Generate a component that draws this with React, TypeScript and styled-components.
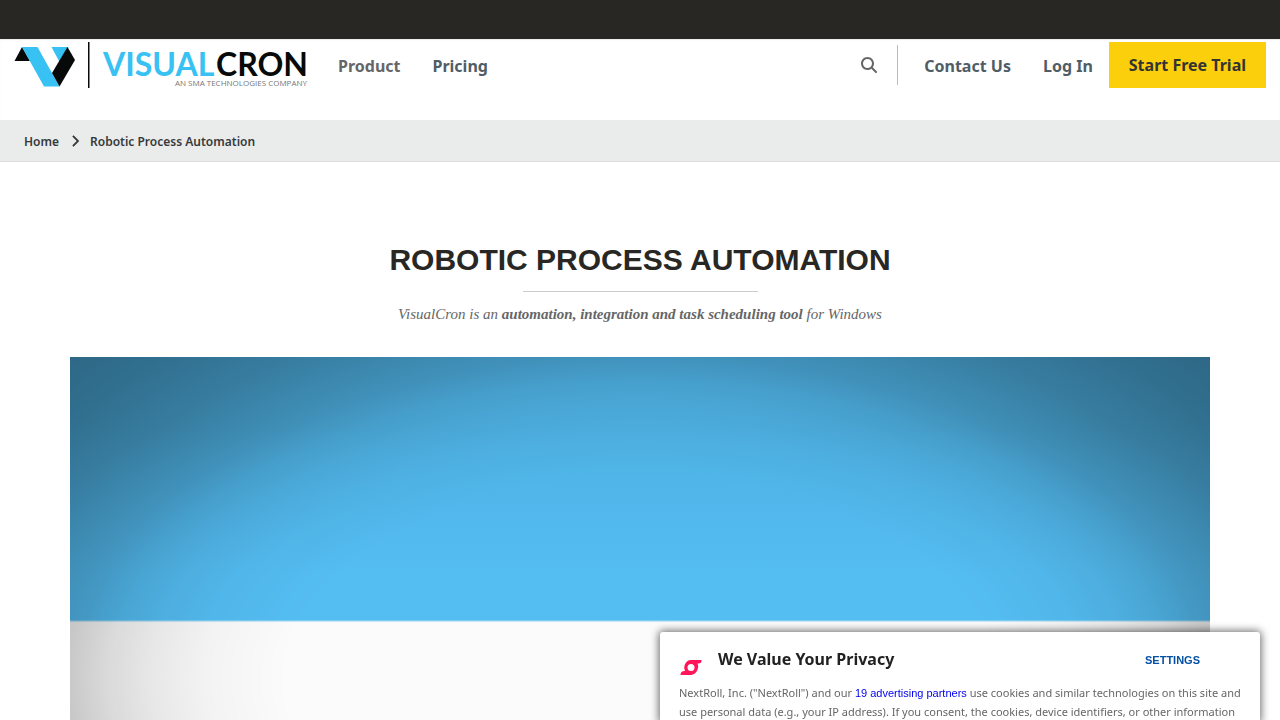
import React from "react";
import styled, { createGlobalStyle } from "styled-components";
import { FaChevronRight, FaMagnifyingGlass } from "react-icons/fa6";

const GlobalStyle = createGlobalStyle`
  *, *::before, *::after { box-sizing: border-box; }
  body {
    margin: 0;
    background: #fff;
    color: #666;
    font-family: "Noto Sans", sans-serif;
  }
  h1, h2, p, ol { margin: 0; padding: 0; }
  a { text-decoration: none; }
`;

const TopBar = styled.div`
  height: 39px;
  background: #282723;
`;

const Header = styled.header`
  display: flex;
  align-items: flex-start;
  min-height: 81px;
  padding: 3px 14px 0;
  box-shadow: inset 0 1px 1px rgba(0, 0, 0, 0.08);
`;

const LogoLink = styled.a`
  display: block;
  width: 294px;
  height: 46px;
  margin-right: 14px;
  svg { display: block; }
`;

const Nav = styled.nav`
  display: flex;
  align-items: center;
  height: 48px;
`;

const NavLink = styled.a<{ $tone?: string }>`
  padding: 0 16px;
  color: ${(p) => p.$tone || "#4f5d66"};
  font-size: 16px;
  font-weight: 700;
  line-height: 24px;
`;

const Tools = styled.div`
  display: flex;
  align-items: flex-start;
  margin-left: auto;
`;

const SearchButton = styled.button`
  display: flex;
  align-items: center;
  height: 46px;
  padding: 0 20px;
  border: 0;
  background: none;
  color: #666;
  font-size: 16px;
`;

const Divider = styled.span`
  width: 1px;
  height: 40px;
  margin: 3px 10px 0 0;
  background: #b9bcbe;
`;

const TrialLink = styled.a`
  display: flex;
  align-items: center;
  height: 46px;
  padding: 0 20px;
  background: #fccf0d;
  color: #333;
  font-size: 16px;
  font-weight: 700;
`;

const Crumbs = styled.nav`
  padding: 11px 24px 9px;
  border-bottom: 1px solid #dcdfde;
  background: #eaeceb;
  ol {
    display: flex;
    align-items: center;
    list-style: none;
  }
  li {
    display: flex;
    align-items: center;
  }
  svg {
    margin: 0 9px 2px 10px;
    stroke: #363a3c;
    stroke-width: 24px;
  }
`;

const Crumb = styled.a`
  color: #363a3c;
  font-size: 12px;
  font-weight: 600;
  line-height: 21px;
`;

const Main = styled.main`
  max-width: 1170px;
  margin: 0 auto;
  padding: 78px 15px 0;
`;

const Intro = styled.section`
  display: flex;
  flex-direction: column;
  align-items: center;
  text-align: center;
`;

const Title = styled.h1`
  color: #282723;
  font: bold 30px/40px "Liberation Sans", sans-serif;
  text-transform: uppercase;
`;

const Rule = styled.span`
  width: 235px;
  height: 1px;
  margin: 11px 0 10px;
  background: #ccc;
`;

const Lead = styled.p`
  font: italic 15px/24px "Liberation Serif", serif;
  color: #666;
`;

const Video = styled.div`
  margin-top: 31px;
  aspect-ratio: 16 / 9;
  background:
    radial-gradient(
      ellipse 50% 50% at center,
      rgba(0, 0, 0, 0) 62%,
      rgba(0, 0, 0, 0.03) 76%,
      rgba(0, 0, 0, 0.08) 86%,
      rgba(0, 0, 0, 0.13) 93%,
      rgba(0, 0, 0, 0.2) 100%,
      rgba(0, 0, 0, 0.3) 114%,
      rgba(0, 0, 0, 0.38) 128%,
      rgba(0, 0, 0, 0.43) 141%
    ),
    linear-gradient(
      #51b7eb 0%,
      #4fb3e5 11%,
      #51b7eb 22%,
      #54bdf2 34%,
      #54bdf2 41%,
      #fbfbfb 41.4%
    );
`;

const Consent = styled.section`
  position: fixed;
  right: 20px;
  bottom: -2px;
  width: 600px;
  max-width: calc(100% - 40px);
  padding: 15px 19px 0;
  border-radius: 3px 3px 0 0;
  background: #fff;
  box-shadow: 0 0 9px 1px rgba(0, 0, 0, 0.6);
`;

const ConsentHead = styled.div`
  display: flex;
  align-items: flex-start;
  height: 36px;
  padding-right: 41px;
  svg { margin: 13px 15px 0 1px; }
`;

const ConsentTitle = styled.h2`
  flex: 1;
  color: #222;
  font-size: 16px;
  font-weight: 700;
  line-height: 24px;
`;

const SettingsButton = styled.button`
  padding: 0;
  border: 0;
  background: none;
  color: #0450a4;
  font: bold 11px/26px "Liberation Sans", sans-serif;
`;

const ConsentText = styled.p`
  height: 39px;
  font-size: 11px;
  line-height: 19px;
  a {
    color: #0000ee;
    font-family: "Liberation Sans", sans-serif;
    line-height: 1;
  }
`;

const Logo = () => (
  <svg width="294" height="46" viewBox="0 0 294 46" role="img" aria-label="VisualCron">
    <path d="M0.500 19 8 5 16 19z" fill="#080a09" />
    <path d="M8 5H23.500L38 31 45.500 44.500H30z" fill="#38c1f3" />
    <path d="M37.500 5h17l-9 15z" fill="#38c1f3" />
    <path d="M53.500 5 61 18 45.500 44.500 38 31z" fill="#080a09" />
    <path d="M74 0h1.500v46H74z" fill="#080a09" />
    <text x="89" y="34" fontFamily="Lato" fontSize="32" fontWeight="700" fill="#38c1f3">
      VISUAL
    </text>
    <text x="294" y="34" textAnchor="end" fontFamily="Lato" fontSize="32" fontWeight="700" fill="#080a09">
      CRON
    </text>
    <text x="293" y="44" textAnchor="end" fontFamily="Open Sans" fontSize="8" fill="#777">
      AN SMA TECHNOLOGIES COMPANY
    </text>
  </svg>
);

const NextRollMark = () => (
  <svg width="23" height="16" viewBox="0 0 23 16" aria-hidden="true">
    <path
      d="M11 0H21.500Q22 3.500 18 3.500H17.500Q18.500 5.500 18 8C17 12.500 14 15 10 15H.500Q.500 11 4.500 11H5Q3.500 8.500 4.500 5.500C5.500 2 8 0 11 0Z"
      fill="#ff1558"
    />
    <circle cx="11" cy="7.500" r="3.500" fill="#fff" />
  </svg>
);

export default function App() {
  return (
    <>
      <GlobalStyle />
      <TopBar />
      <Header>
        <LogoLink href="#">
          <Logo />
        </LogoLink>
        <Nav aria-label="Main">
          <NavLink href="#product" $tone="#666">Product</NavLink>
          <NavLink href="#pricing">Pricing</NavLink>
        </Nav>
        <Tools>
          <SearchButton type="button" aria-label="Search">
            <FaMagnifyingGlass />
          </SearchButton>
          <Divider />
          <Nav aria-label="Account">
            <NavLink href="#contact">Contact Us</NavLink>
            <NavLink href="#login">Log In</NavLink>
          </Nav>
          <TrialLink href="#trial">Start Free Trial</TrialLink>
        </Tools>
      </Header>
      <Crumbs aria-label="Breadcrumb">
        <ol>
          <li>
            <Crumb href="#">Home</Crumb>
            <FaChevronRight size={12} color="#363a3c" aria-hidden="true" />
          </li>
          <li>
            <Crumb href="#rpa" aria-current="page">Robotic Process Automation</Crumb>
          </li>
        </ol>
      </Crumbs>
      <Main>
        <Intro>
          <Title>Robotic Process Automation</Title>
          <Rule />
          <Lead>
            VisualCron is an <strong>automation, integration and task scheduling tool</strong> for Windows
          </Lead>
        </Intro>
        <Video />
      </Main>
      <Consent aria-labelledby="consent-title">
        <ConsentHead>
          <NextRollMark />
          <ConsentTitle id="consent-title">We Value Your Privacy</ConsentTitle>
          <SettingsButton type="button">SETTINGS</SettingsButton>
        </ConsentHead>
        <ConsentText>
          NextRoll, Inc. ("NextRoll") and our <a href="#partners">19 advertising partners</a> use cookies and
          similar technologies on this site and use personal data (e.g., your IP address). If you consent, the
          cookies, device identifiers, or other information
        </ConsentText>
      </Consent>
    </>
  );
}
